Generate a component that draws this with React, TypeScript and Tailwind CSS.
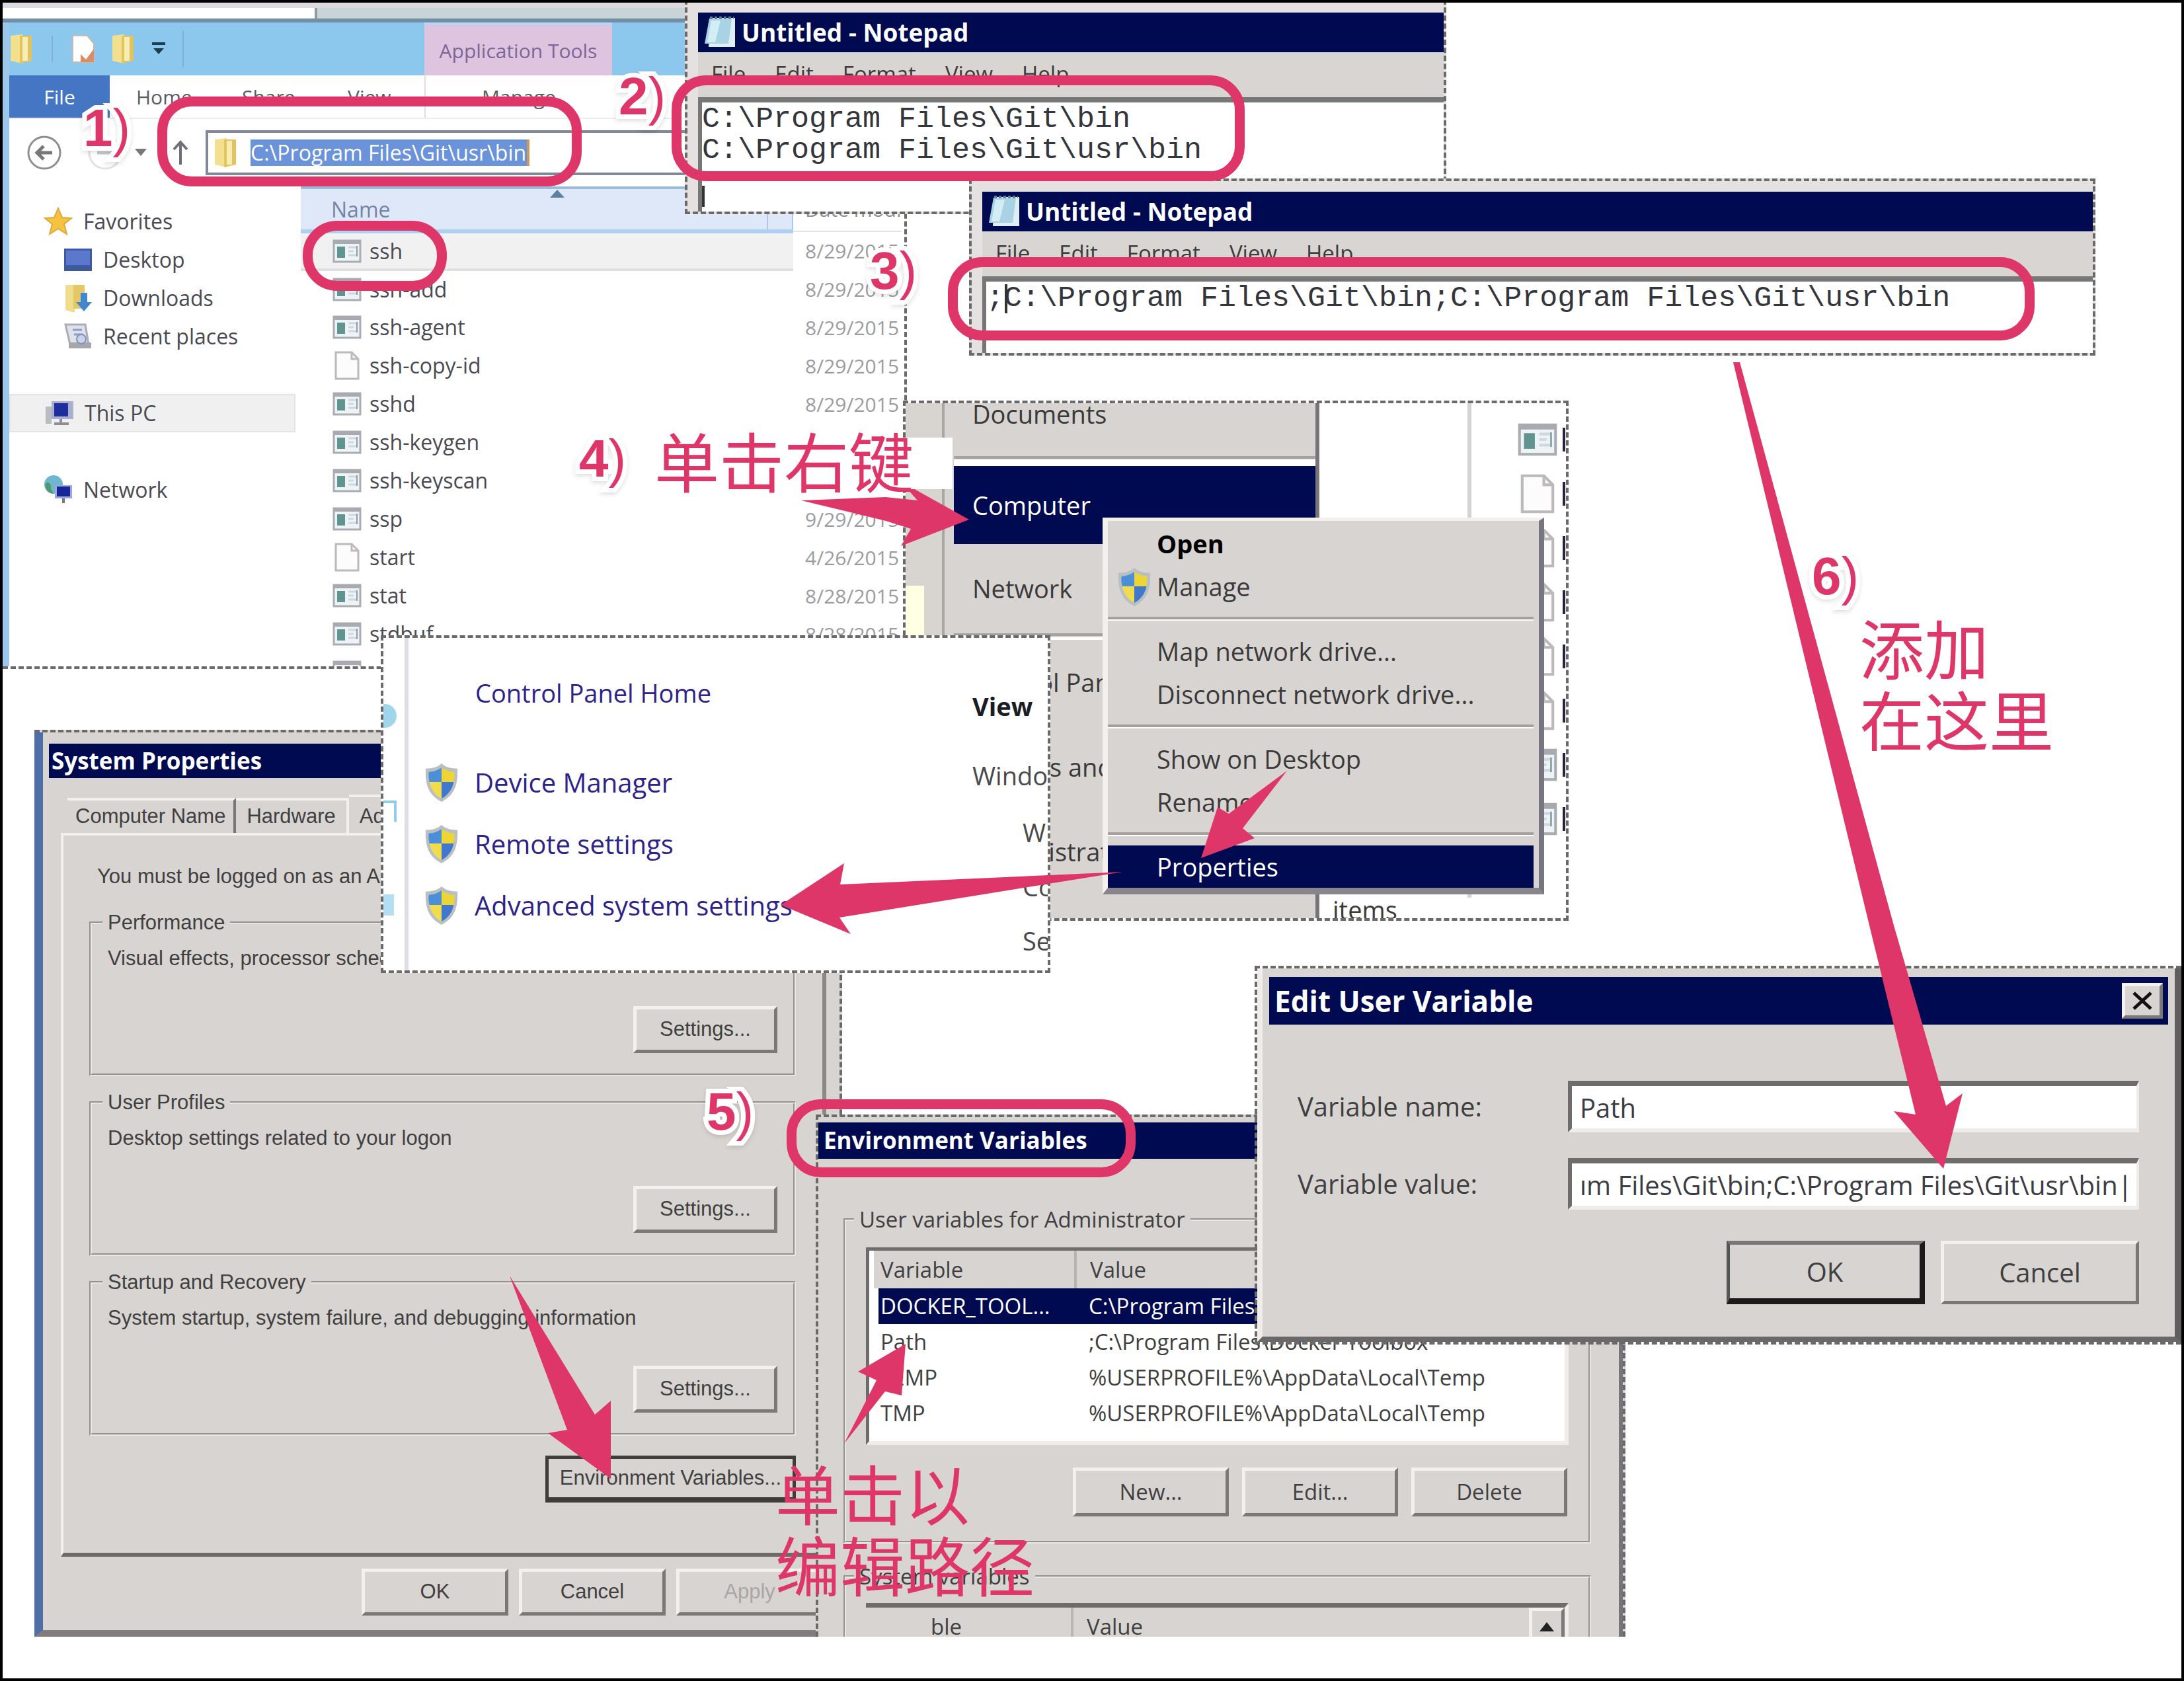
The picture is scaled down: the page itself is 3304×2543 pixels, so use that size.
import React from "react";

const SANS = "font-['Open_Sans','Noto_Sans',sans-serif]";
const MONO = "font-['Liberation_Mono',monospace]";
const CJK = "font-['Noto_Sans_CJK_SC',sans-serif]";
const BEVEL = "border-[5px] border-t-[#f3f0ee] border-l-[#f3f0ee] border-r-[#7b7878] border-b-[#7b7878]";

function ExeIcon({ className = "h-9 w-11" }: { className?: string }) {
  return (
    <svg viewBox="0 0 44 36" className={className} preserveAspectRatio="none" aria-hidden="true">
      <rect x="2" y="2" width="40" height="32" fill="#eef3f5" stroke="#a9adb3" strokeWidth="3" />
      <rect x="2" y="1" width="40" height="6" fill="#a9a9b0" />
      <rect x="7" y="11" width="12" height="17" fill="#5f9490" />
      <path d="M24 12h12M24 18h8M24 24h12" stroke="#cfd8de" strokeWidth="3" />
      <path d="M37 10v16" stroke="#8aa0a8" strokeWidth="2" />
    </svg>
  );
}

function PageIcon({ className = "h-11 w-11" }: { className?: string }) {
  return (
    <svg viewBox="0 0 44 44" className={className} preserveAspectRatio="none" aria-hidden="true">
      <path d="M5 2h24l10 10v30H5z" fill="#fdfcfc" stroke="#bdb8ba" strokeWidth="3" />
      <path d="M29 2v10h10" fill="none" stroke="#bdb8ba" strokeWidth="3" />
    </svg>
  );
}

function FolderIcon({ className = "h-12 w-9" }: { className?: string }) {
  return (
    <svg viewBox="0 0 36 48" className={className} aria-hidden="true">
      <path d="M2 4l18-2v44l-18-4z" fill="#f3e08f" />
      <path d="M16 4h18v38l-18 4z" fill="#e2c45c" />
      <path d="M20 6h8v36h-8z" fill="#f7edb4" />
    </svg>
  );
}

function Shield() {
  return (
    <svg viewBox="0 0 54 62" className="h-[60px] w-[52px] shrink-0" aria-hidden="true">
      <path d="M27 1c7 6 15 8 25 8 1 26-5 42-25 52C7 51 1 35 2 9c10 0 18-2 25-8z" fill="#b9bfc2" />
      <path d="M27 7v23H8c-1-5-2-10-1-16 8 0 14-3 20-7z" fill="#4b8fd8" />
      <path d="M27 7v23h19c1-5 2-10 1-16-8 0-14-3-20-7z" fill="#ecd534" />
      <path d="M27 30v26C16 50 10 41 8 30z" fill="#f0dc4c" />
      <path d="M27 30v26c11-6 17-15 19-26z" fill="#3f78cc" />
    </svg>
  );
}

function NotepadIcon() {
  return (
    <svg viewBox="0 0 50 52" className="h-[52px] w-[50px]" aria-hidden="true">
      <path d="M10 4h38v44H8z" fill="#dfeef2" />
      <path d="M9 5h34l-5 38H2z" fill="#a9d3e4" />
      <path d="M12 8h14l-8 33H6z" fill="#d4ecf4" />
      <path d="M10 4h36" stroke="#5e7f95" strokeWidth="4" strokeDasharray="4 3" />
    </svg>
  );
}

function StarIcon() {
  return (
    <svg viewBox="0 0 44 44" className="h-11 w-11" aria-hidden="true">
      <path d="M22 2l6 14 14 1-11 9 4 15-13-8-13 8 4-15L2 17l14-1z" fill="#f5c242" stroke="#e0a93a" strokeWidth="2" />
    </svg>
  );
}

function DesktopIcon() {
  return (
    <svg viewBox="0 0 44 36" className="h-9 w-11" aria-hidden="true">
      <rect x="1" y="1" width="42" height="34" fill="#3c5aa8" />
      <rect x="4" y="4" width="36" height="22" fill="#5c78cc" />
      <rect x="1" y="29" width="42" height="6" fill="#3f5a92" />
    </svg>
  );
}

function DownloadsIcon() {
  return (
    <svg viewBox="0 0 44 44" className="h-11 w-11" aria-hidden="true">
      <path d="M3 2h14v42L3 40z" fill="#f0dd8c" />
      <path d="M15 2h17v36H15z" fill="#e4c766" />
      <path d="M26 14h10v14h7L31 42 19 28h7z" fill="#3f87cf" />
    </svg>
  );
}

function RecentIcon() {
  return (
    <svg viewBox="0 0 44 40" className="h-10 w-11" aria-hidden="true">
      <path d="M3 2h30l5 30H10z" fill="#dfe2ea" stroke="#a9adb8" strokeWidth="3" />
      <path d="M14 10h14M16 17h14" stroke="#8a9cc8" strokeWidth="3" />
      <rect x="8" y="29" width="34" height="9" fill="#a7a7ab" />
      <circle cx="27" cy="24" r="7" fill="#c9d4ec" stroke="#8492b8" strokeWidth="2" />
    </svg>
  );
}

function ComputerIcon() {
  return (
    <svg viewBox="0 0 44 40" className="h-10 w-11" aria-hidden="true">
      <rect x="1" y="10" width="9" height="26" fill="#b9bcc2" />
      <rect x="10" y="2" width="33" height="27" fill="#a9b0cf" />
      <rect x="14" y="5" width="21" height="20" fill="#1c2f9c" />
      <path d="M14 36h22M24 29v7" stroke="#8d8f94" strokeWidth="4" />
    </svg>
  );
}

function NetworkIcon() {
  return (
    <svg viewBox="0 0 44 44" className="h-11 w-11" aria-hidden="true">
      <circle cx="15" cy="14" r="14" fill="#6fb7cf" />
      <path d="M3 12c5-3 9 2 8 8l4 8C7 27 1 20 3 12z" fill="#4f9a6a" />
      <rect x="17" y="15" width="26" height="20" fill="#9ea8d6" />
      <rect x="20" y="17" width="20" height="15" fill="#16279a" />
      <path d="M30 35v7" stroke="#777" strokeWidth="4" />
    </svg>
  );
}

const files: { name: string; date: string; page?: boolean }[] = [
  { name: "ssh", date: "8/29/2015" },
  { name: "ssh-add", date: "8/29/2015" },
  { name: "ssh-agent", date: "8/29/2015" },
  { name: "ssh-copy-id", date: "8/29/2015", page: true },
  { name: "sshd", date: "8/29/2015" },
  { name: "ssh-keygen", date: "" },
  { name: "ssh-keyscan", date: "" },
  { name: "ssp", date: "9/29/2015" },
  { name: "start", date: "4/26/2015", page: true },
  { name: "stat", date: "8/28/2015" },
  { name: "stdbuf", date: "8/28/2015" },
  { name: "", date: "" },
];

function TreeItem({ icon, label, className }: { icon: React.ReactNode; label: string; className: string }) {
  return (
    <a href="#" className={`flex h-[58px] items-center gap-4 text-[32px] text-[#4a4a52] ${className}`}>
      {icon}
      {label}
    </a>
  );
}

function Explorer() {
  return (
    <section className={`absolute left-[4px] top-0 h-[1012px] w-[1368px] overflow-hidden border-b-4 border-r-4 border-dashed border-[#6a6a6a] bg-white ${SANS}`}>
      <div className="flex h-7 bg-[#dcdadf] pt-3">
        <div className="h-full w-[476px] border-r-4 border-[#8f9aa2] bg-white" />
        <div className="h-full flex-1 bg-[#c9d4d9]" />
      </div>
      <div className="h-[6px] bg-[#738fa8]" />
      <div className="border-l-[10px] border-solid border-[#9cc6ea]">
        <header className="flex h-20 items-center bg-[#8cc8ee]">
          <FolderIcon />
          <span className="ml-7 h-10 w-[2px] bg-[#7fb2d8]" />
          <svg viewBox="0 0 36 48" className="ml-7 h-12 w-9" aria-hidden="true">
            <path d="M2 4h22l10 12v28H2z" fill="#fff" stroke="#c9b9b0" strokeWidth="2" />
            <path d="M14 32l8 8 12-16v20H14z" fill="#dc8b62" />
          </svg>
          <FolderIcon className="ml-6 h-12 w-9" />
          <svg viewBox="0 0 24 24" className="ml-6 h-6 w-6" aria-hidden="true">
            <path d="M2 4h20" stroke="#1f3c4c" strokeWidth="4" />
            <path d="M4 11h16l-8 9z" fill="#1f3c4c" />
          </svg>
          <span className="ml-6 h-14 w-[2px] bg-[#7fb2d8]" />
          <div className="ml-auto mr-[442px] flex h-full w-[284px] items-center justify-center border-t-4 border-[#b6d6f6] bg-[#dfc4e0] text-[30px] text-[#7c6796]">
            Application Tools
          </div>
        </header>
        <nav className="flex h-16 items-center text-[30px] text-[#5c5c62]">
          <button className="h-full w-[152px] bg-[#4576c4] text-white">File</button>
          <button className="ml-10 w-[160px] text-left">Home</button>
          <button className="w-[160px] text-left">Share</button>
          <button className="w-[116px] text-left">View</button>
          <button className="h-full w-[284px] border-l-2 border-[#e6d8e8]">Manage</button>
        </nav>
        <div className="flex h-[104px] items-center border-t-2 border-[#ececf0]">
          <svg viewBox="0 0 56 56" className="ml-[25px] h-14 w-14" aria-hidden="true">
            <circle cx="28" cy="28" r="24" fill="#fff" stroke="#8f8f94" strokeWidth="3" />
            <path d="M40 28H18M27 18L17 28l10 10" fill="none" stroke="#77777c" strokeWidth="5" />
          </svg>
          <svg viewBox="0 0 56 56" className="ml-9 h-14 w-14" aria-hidden="true">
            <circle cx="28" cy="28" r="24" fill="#fff" stroke="#e2e2e6" strokeWidth="3" />
            <path d="M16 28h22" stroke="#c9c9ce" strokeWidth="5" />
          </svg>
          <svg viewBox="0 0 20 14" className="ml-4 h-3.5 w-5" aria-hidden="true">
            <path d="M1 1h18l-9 11z" fill="#77777c" />
          </svg>
          <svg viewBox="0 0 28 40" className="ml-9 h-10 w-7" aria-hidden="true">
            <path d="M14 38V5M4 15L14 4l10 11" fill="none" stroke="#6f6f76" strokeWidth="4" />
          </svg>
          <div className="ml-6 flex h-[68px] w-[760px] items-center gap-5 border-4 border-solid border-[#80889a] bg-white pl-2">
            <FolderIcon />
            <input
              aria-label="Address"
              readOnly
              value="C:\Program Files\Git\usr\bin"
              className="h-10 w-[422px] border-r-4 border-[#c99a5c] bg-[#6a93da] text-[32px] text-white outline-none"
            />
          </div>
        </div>
        <div className="flex">
          <aside className="flex w-[441px] flex-col pt-6">
            <TreeItem icon={<StarIcon />} label="Favorites" className="pl-[52px]" />
            <TreeItem icon={<DesktopIcon />} label="Desktop" className="pl-[82px]" />
            <TreeItem icon={<DownloadsIcon />} label="Downloads" className="pl-[82px]" />
            <TreeItem icon={<RecentIcon />} label="Recent places" className="pl-[82px]" />
            <TreeItem icon={<ComputerIcon />} label="This PC" className="mr-2 mt-[58px] border-2 border-[#e4e4e4] bg-[#f0f0f0] pl-[52px]" />
            <TreeItem icon={<NetworkIcon />} label="Network" className="mt-[58px] pl-[52px]" />
          </aside>
          <table className="w-[909px] table-fixed text-left text-[32px] text-[#4a4a52]">
            <thead>
              <tr className="h-[66px]">
                <th className="relative w-[745px] border-b-[6px] border-t-4 border-b-[#aed0f2] border-t-[#9cbcdc] bg-[#dfe8f8] pl-[46px] font-normal text-[#7484a4]">
                  Name
                  <svg viewBox="0 0 24 14" className="absolute left-[376px] top-0 h-3.5 w-6" aria-hidden="true">
                    <path d="M12 1l11 12H1z" fill="#5d7fa0" />
                  </svg>
                  <span className="absolute right-0 top-0 h-full w-10 border-x-2 border-[#a8c8ea]" />
                </th>
                <th className="overflow-hidden whitespace-nowrap border-b-2 border-[#e2e2e2] pl-[18px] text-[30px] font-normal text-[#8d8d92]">Date modified</th>
              </tr>
            </thead>
            <tbody>
              {files.map((f, i) => (
                <tr key={i} className="h-[58px]">
                  <td className={i === 0 ? "border-b-4 border-[#e0e0e0] bg-[#f1f1f2] pl-12" : "pl-12"}>
                    <span className="flex items-center gap-3 leading-[44px]">
                      {f.page ? <PageIcon /> : <ExeIcon />}
                      {f.name}
                    </span>
                  </td>
                  <td className="overflow-hidden whitespace-nowrap pl-[18px] text-[30px] text-[#9c9ca0]">{f.date}</td>
                </tr>
              ))}
            </tbody>
          </table>
        </div>
      </div>
    </section>
  );
}

function Notepad({ className, lines, caret }: { className: string; lines: string[]; caret: boolean }) {
  return (
    <section className={`absolute flex flex-col overflow-hidden border-4 border-dashed border-[#6a6a6a] bg-[#e4e1e0] pl-4 pt-4 ${SANS} ${className}`}>
      <header className="flex h-[60px] shrink-0 items-center gap-2 bg-[#000a50] pl-2 text-[37px] font-bold text-white">
        <NotepadIcon />
        Untitled - Notepad
      </header>
      <nav className="flex h-[68px] shrink-0 items-start gap-11 bg-[#d8d5d2] pl-5 pt-2 text-[33px] text-[#3c3c3c]">
        <button>File</button>
        <button>Edit</button>
        <button>Format</button>
        <button>View</button>
        <button>Help</button>
      </nav>
      <div className={`flex-1 border-l-[6px] border-t-[8px] border-solid border-[#777] bg-white text-[45px] leading-[43px] text-[#35353c] ${MONO}`}>
        {lines.map((l) => (
          <p key={l} className="relative whitespace-pre pt-1">
            {l}
            {caret && <span className="absolute left-[28px] top-1 h-11 w-1 bg-[#333]" />}
          </p>
        ))}
        {!caret && <span className="mt-8 block h-8 w-1 bg-[#333]" />}
      </div>
    </section>
  );
}

function SystemGroup({ title, text }: { title: string; text: string }) {
  return (
    <fieldset className="mb-[22px] h-[250px] shrink-0 border-4 border-[#e9e6e4] [border-style:groove]">
      <legend className="ml-4 px-2 leading-9">{title}</legend>
      <p className="ml-6 mt-4 whitespace-nowrap leading-10">{text}</p>
      <button className={`ml-auto mr-6 mt-[52px] block h-[71px] w-[218px] ${BEVEL}`}>Settings...</button>
    </fieldset>
  );
}

function SystemProperties() {
  return (
    <section className="absolute left-[52px] top-[1104px] flex h-[1372px] w-[1222px] flex-col overflow-hidden border-r-4 border-t-4 border-dashed border-[#6a6a6a] bg-[#d8d4d2] font-['Liberation_Sans',sans-serif] text-[31px] text-[#404040]">
      <div className="mr-5 flex flex-1 flex-col border-b-[10px] border-l-[13px] border-r-[6px] border-solid border-b-[#807d7c] border-l-[#4d6ea6] border-r-[#8b8888] pl-[9px] pt-[17px]">
        <header className={`flex h-[52px] items-center bg-[#000a50] pl-1 text-[35px] font-bold text-white ${SANS}`}>System Properties</header>
        <div className="ml-7 mt-[30px] flex h-[53px] items-center">
          <button className="h-full border-r-4 border-t-4 border-r-[#777] border-t-[#f3f0ee] px-3">Computer Name</button>
          <button className="h-full border-r-4 border-t-4 border-[#f3f0ee] px-4">Hardware</button>
          <button className="h-16 border-t-4 border-[#f3f0ee] px-4">Advanced</button>
        </div>
        <div className="ml-[18px] flex h-[1095px] flex-col border-b-[6px] border-l-4 border-t-4 border-b-[#6d6a6a] border-l-[#f3f0ee] border-t-[#f3f0ee] pl-[39px] pr-10 pt-[42px]">
          <p className="mb-8 ml-3 whitespace-nowrap leading-10">You must be logged on as an Administrator</p>
          <SystemGroup title="Performance" text="Visual effects, processor scheduling, memory usage" />
          <SystemGroup title="User Profiles" text="Desktop settings related to your logon" />
          <SystemGroup title="Startup and Recovery" text="System startup, system failure, and debugging information" />
          <button className="ml-auto mt-2 h-[71px] w-[379px] whitespace-nowrap border-[5px] border-b-[8px] border-[#3f3c3c]">Environment Variables...</button>
        </div>
        <div className="ml-[473px] mt-[18px] flex gap-4">
          <button className={`h-[71px] w-[222px] shrink-0 ${BEVEL}`}>OK</button>
          <button className={`h-[71px] w-[222px] shrink-0 ${BEVEL}`}>Cancel</button>
          <button disabled className={`h-[71px] w-[222px] shrink-0 text-[#a9a6a6] ${BEVEL}`}>Apply</button>
        </div>
      </div>
    </section>
  );
}

function MenuRule() {
  return <div className="mb-[14px] mt-[13px] h-[5px] shrink-0 border-b-2 border-t-4 border-b-white border-t-[#a5a1a0]" />;
}

function StartMenu() {
  const item = "flex h-[65px] shrink-0 items-center pl-[74px] text-left";
  return (
    <section className={`absolute left-[1366px] top-[606px] flex h-[787px] w-[1007px] overflow-hidden border-4 border-dashed border-[#6a6a6a] bg-white text-[38px] text-[#3a3a3a] ${SANS}`}>
      <div className="flex w-[59px] shrink-0 flex-col border-r-4 border-solid border-[#a9a6a6] bg-[#d8d5d0]">
        <div className="mt-[276px] h-[80px] w-7 bg-[#ffffe3]" />
      </div>
      <div className="flex w-[567px] shrink-0 flex-col border-r-[6px] border-solid border-[#77757a] bg-[#d8d4d2] pl-[14px]">
        <div className="h-20 pl-[28px] leading-8">Documents</div>
        <div className="h-[15px] border-b-[10px] border-t-4 border-b-white border-t-[#a5a1a0]" />
        <div className="flex h-[118px] items-center bg-[#000a50] pl-[28px] text-white">Computer</div>
        <div className="flex h-[135px] items-center pl-[28px]">Network</div>
        <div className="h-[10px] border-b-4 border-t-4 border-b-white border-t-[#a5a1a0]" />
        <div className="flex h-[128px] items-center whitespace-nowrap pl-[28px]">Control Panel</div>
        <div className="flex h-[128px] items-center whitespace-nowrap pl-[28px]">Devices and Printers</div>
        <div className="flex h-[128px] items-center whitespace-nowrap pl-[28px]">Administrative Tools</div>
      </div>
      <div className="flex flex-1 flex-col">
        <div className="flex h-[748px] shrink-0 pl-[224px]">
          <div className="w-[76px] border-l-[6px] border-solid border-[#d5d3d6]" />
          <div className="flex flex-col gap-5 pt-6">
            {[0, 1, 2, 3, 4, 5, 6, 7].map((i) => (
              <div key={i} className="flex h-[62px] items-center gap-2">
                {i === 0 || i > 5 ? <ExeIcon className="h-[50px] w-[60px]" /> : <PageIcon className="h-[60px] w-[60px]" />}
                <span className="h-9 w-1 bg-[#2d2140]" />
              </div>
            ))}
          </div>
        </div>
        <div className="pl-5 leading-9">items</div>
      </div>
      <div className="absolute left-[298px] top-[173px] flex w-[668px] flex-col border-b-[10px] border-l-[8px] border-r-[8px] border-t-[5px] border-solid border-b-[#88868c] border-l-[#f3f0ee] border-r-[#77757f] border-t-[#f3f0ee] bg-[#d8d4d2] pr-2 pt-[2px]" role="menu">
        <button className={`${item} font-bold text-black`}>Open</button>
        <button className="flex h-[65px] shrink-0 items-center gap-2 pl-[14px] text-left">
          <Shield />
          Manage
        </button>
        <MenuRule />
        <button className={item}>Map network drive...</button>
        <button className={item}>Disconnect network drive...</button>
        <MenuRule />
        <button className={item}>Show on Desktop</button>
        <button className={item}>Rename</button>
        <MenuRule />
        <button className="flex h-16 shrink-0 items-center bg-[#000a50] pl-[74px] text-left text-white">Properties</button>
      </div>
    </section>
  );
}

function ControlPanel() {
  return (
    <section className={`absolute left-[576px] top-[961px] flex h-[511px] w-[1013px] overflow-hidden border-4 border-dashed border-[#6a6a6a] bg-white text-[38px] leading-[48px] ${SANS}`}>
      <div className="flex w-[38px] shrink-0 flex-col border-r-[6px] border-solid border-[#dddfe4] pt-[100px]">
        <div className="h-9 w-5 rounded-r-full bg-[#9fd6ec]" />
        <div className="mt-[110px] h-8 w-5 border-r-4 border-t-4 border-[#8fcdea]" />
        <div className="mt-[110px] h-8 w-4 bg-[#b4def2]" />
      </div>
      <nav className="flex w-[853px] shrink-0 flex-col text-[#2d2388]">
        <a href="#" className="ml-[101px] mt-[59px]">Control Panel Home</a>
        <div className="ml-6 mt-[65px] flex flex-col text-[40px]">
          {["Device Manager", "Remote settings", "Advanced system settings"].map((t) => (
            <a key={t} href="#" className="flex h-[93px] items-center gap-6">
              <Shield />
              {t}
            </a>
          ))}
        </div>
      </nav>
      <div className="flex flex-col whitespace-nowrap text-[#4a4a4a]">
        <h2 className="mt-[79px] font-bold text-[#1c1c24]">View</h2>
        <p className="mt-[57px]">Windows</p>
        <p className="ml-[76px] mt-[38px]">Windows</p>
        <p className="ml-[76px] mt-[34px]">Copyright</p>
        <p className="ml-[76px] mt-[34px]">Service</p>
      </div>
    </section>
  );
}

function EnvironmentVariables() {
  const rows = [
    ["DOCKER_TOOL...", "C:\\Program Files\\Docker Toolbox"],
    ["Path", ";C:\\Program Files\\Docker Toolbox"],
    ["TEMP", "%USERPROFILE%\\AppData\\Local\\Temp"],
    ["TMP", "%USERPROFILE%\\AppData\\Local\\Temp"],
  ];
  const btn = `h-[74px] w-[236px] ${BEVEL}`;
  return (
    <section className={`absolute left-[1234px] top-[1686px] flex h-[790px] w-[1225px] flex-col overflow-hidden border-l-4 border-r-4 border-t-4 border-dashed border-[#6a6a6a] bg-[#d8d4d2] pt-2 text-[33px] text-[#404040] ${SANS}`}>
      <header className="flex h-[55px] shrink-0 items-center bg-[#000a50] pl-2 text-[35px] font-bold text-white">Environment Variables</header>
      <div className="flex flex-1 flex-col border-r-[6px] border-solid border-[#77757a] pl-[38px] pr-[42px] pt-[72px]">
        <fieldset className="h-[510px] shrink-0 border-4 border-[#e9e6e4] [border-style:groove]">
          <legend className="ml-3 px-2 leading-10">User variables for Administrator</legend>
          <div className="mx-[30px] mt-[22px] h-[299px] border-b-[6px] border-l-[5px] border-r-[6px] border-t-[5px] border-b-[#efecea] border-l-[#6f6c6c] border-r-[#efecea] border-t-[#6f6c6c] bg-white">
            <table className="w-full table-fixed whitespace-nowrap text-left">
              <thead>
                <tr className="h-[57px] bg-[#d8d4d2]">
                  <th className="w-[305px] border-r-4 border-[#b9b5b4] pl-[10px] font-normal">Variable</th>
                  <th className="pl-5 font-normal">Value</th>
                </tr>
              </thead>
              <tbody>
                {rows.map(([k, v], i) => (
                  <tr key={k} className="h-[54px]">
                    <td className={i === 0 ? "border-l-[14px] border-white bg-[#000a50] pl-[3px] leading-[52px] text-white" : "border-l-[14px] border-white pl-[3px] leading-[52px]"}>{k}</td>
                    <td className={i === 0 ? "bg-[#000a50] pl-5 leading-[52px] text-white" : "pl-5 leading-[52px]"}>{v}</td>
                  </tr>
                ))}
              </tbody>
            </table>
          </div>
          <div className="mr-8 mt-[34px] flex justify-end gap-5">
            <button className={btn}>New...</button>
            <button className={btn}>Edit...</button>
            <button className={btn}>Delete</button>
          </div>
        </fieldset>
        <fieldset className="mt-[30px] h-[200px] shrink-0 border-4 border-[#e9e6e4] [border-style:groove]">
          <legend className="ml-3 px-2 leading-10">System variables</legend>
          <div className="mx-[30px] mt-5 flex h-[120px] border-r-[6px] border-t-[7px] border-r-[#efecea] border-t-[#6f6c6c]">
            <div className="h-full w-[314px] border-r-4 border-[#b9b5b4] pl-[98px] pt-1">ble</div>
            <div className="h-full flex-1 pl-5 pt-1">Value</div>
            <button aria-label="Scroll up" className={`flex h-[70px] w-[54px] justify-center pt-4 ${BEVEL}`}>
              <svg viewBox="0 0 24 16" className="h-4 w-6" aria-hidden="true">
                <path d="M12 1l11 14H1z" fill="#222" />
              </svg>
            </button>
          </div>
        </fieldset>
      </div>
    </section>
  );
}

function EditVariable() {
  const field =
    "h-[78px] min-w-0 flex-1 border-b-[6px] border-l-[6px] border-r-4 border-t-[8px] border-b-[#efecea] border-l-[#6f6c6c] border-r-[#efecea] border-t-[#6f6c6c] bg-white text-[40px] text-[#3c3c44] outline-none";
  return (
    <section className={`absolute left-[1898px] top-[1461px] h-[573px] w-[1402px] overflow-hidden border-b-4 border-l-4 border-t-4 border-dashed border-[#6a6a6a] text-[40px] text-[#404040] ${SANS}`}>
      <div className="flex h-full flex-col border-b-[8px] border-l-[8px] border-r-[10px] border-solid border-b-[#6a6868] border-l-[#efecea] border-r-[#5f5d5d] bg-[#d8d4d2] pl-[10px] pr-[10px] pt-[13px]">
        <header className="flex h-[72px] shrink-0 items-center justify-between bg-[#000a50] pl-2 pr-2 text-[44px] font-bold text-white">
          Edit User Variable
          <button aria-label="Close" className={`flex h-[54px] w-[62px] items-center justify-center bg-[#d8d4d2] ${BEVEL}`}>
            <svg viewBox="0 0 32 28" className="h-7 w-8" aria-hidden="true">
              <path d="M3 2l26 24M29 2L3 26" stroke="#111" strokeWidth="5" />
            </svg>
          </button>
        </header>
        <form className="ml-[43px] mr-[44px] mt-[85px] flex flex-col gap-[39px]">
          <div className="flex items-center">
            <label htmlFor="var-name" className="w-[409px]">Variable name:</label>
            <input id="var-name" readOnly value="Path" className={`pl-3 ${field}`} />
          </div>
          <div className="flex items-center">
            <label htmlFor="var-value" className="w-[409px]">Variable value:</label>
            <input id="var-value" readOnly value={"ım Files\\Git\\bin;C:\\Program Files\\Git\\usr\\bin|"} className={`pl-3 ${field}`} />
          </div>
        </form>
        <div className="mr-[44px] mt-[47px] flex justify-end gap-6">
          <button className="h-[96px] w-[300px] border-b-[9px] border-l-[5px] border-r-[8px] border-t-[6px] border-b-[#1c1a1a] border-l-[#555] border-r-[#1c1a1a] border-t-[#777]">OK</button>
          <button className={`h-[96px] w-[300px] ${BEVEL}`}>Cancel</button>
        </div>
      </div>
    </section>
  );
}

function Ring({ className }: { className: string }) {
  return <div className={`absolute border-[15px] border-[#df3669] ${className}`} />;
}

function Step({ n, className }: { n: number; className: string }) {
  return (
    <div className={`absolute font-['Liberation_Sans',sans-serif] text-[80px] leading-[80px] text-[#df3669] [-webkit-text-stroke:14px_white] [paint-order:stroke_fill] drop-shadow-md ${className}`}>
      <b>{n}</b>)
    </div>
  );
}

function Note({ lines, className }: { lines: string[]; className: string }) {
  return (
    <div className={`absolute whitespace-nowrap text-[98px] leading-[108px] text-[#df3669] ${CJK} ${className}`}>
      {lines.map((l) => (
        <p key={l}>{l}</p>
      ))}
    </div>
  );
}

const arrows = [
  "1212,757 1340,752 1388,757 1362,728 1466,786 1363,826 1378,800 1340,788",
  "771,1930 900,2140 924,2119 924,2237 829,2168 858,2163",
  "1947,1166 1880,1253 1898,1268 1817,1298 1842,1221 1859,1231",
  "1698,1319 1270,1388 1287,1413 1181,1369 1277,1306 1271,1338",
  "1277,2184 1326,2088 1298,2075 1370,2033 1364,2111 1339,2105",
  "2622,548 2632,548 2865,1400 2944,1673 2969,1654 2940,1768 2865,1681 2898,1686 2828,1400",
];

export default function App() {
  return (
    <main className="relative h-screen w-full overflow-hidden bg-white">
      <Explorer />
      <SystemProperties />
      <StartMenu />
      <ControlPanel />
      <Notepad className="left-[1036px] top-[-1px] h-[325px] w-[1152px]" lines={["C:\\Program Files\\Git\\bin", "C:\\Program Files\\Git\\usr\\bin"]} caret={false} />
      <div className="absolute left-[1470px] top-[276px] h-12 w-[720px] bg-white" />
      <Notepad className="left-[1466px] top-[270px] h-[268px] w-[1704px]" lines={[";C:\\Program Files\\Git\\bin;C:\\Program Files\\Git\\usr\\bin"]} caret />
      <EnvironmentVariables />
      <EditVariable />

      <svg viewBox="0 0 3304 2543" className="pointer-events-none absolute left-0 top-0 h-[2543px] w-[3304px]" aria-hidden="true">
        {arrows.map((p) => (
          <polygon key={p} points={p} fill="#df3669" />
        ))}
      </svg>

      <Ring className="left-[238px] top-[146px] h-[136px] w-[642px] rounded-[52px]" />
      <Ring className="left-[1016px] top-[114px] h-[160px] w-[867px] rounded-[52px]" />
      <Ring className="left-[458px] top-[334px] h-[106px] w-[218px] rounded-[52px]" />
      <Ring className="left-[1434px] top-[389px] h-[126px] w-[1644px] rounded-[52px]" />
      <Ring className="left-[1190px] top-[1663px] h-[118px] w-[528px] rounded-[52px]" />

      <div className="absolute left-[980px] top-[662px] h-[78px] w-[461px] bg-white" />
      <Note className="left-[990px] top-[640px]" lines={["单击右键"]} />
      <Note className="left-[2813px] top-[923px]" lines={["添加", "在这里"]} />
      <Note className="left-[1173px] top-[2202px]" lines={["单击以", "编辑路径"]} />

      <Step n={1} className="left-[126px] top-[154px]" />
      <Step n={2} className="left-[936px] top-[106px]" />
      <Step n={3} className="left-[1316px] top-[370px]" />
      <Step n={4} className="left-[876px] top-[654px]" />
      <Step n={5} className="left-[1069px] top-[1642px]" />
      <Step n={6} className="left-[2741px] top-[832px]" />

      <div className="pointer-events-none absolute inset-0 border-4 border-black" />
    </main>
  );
}
